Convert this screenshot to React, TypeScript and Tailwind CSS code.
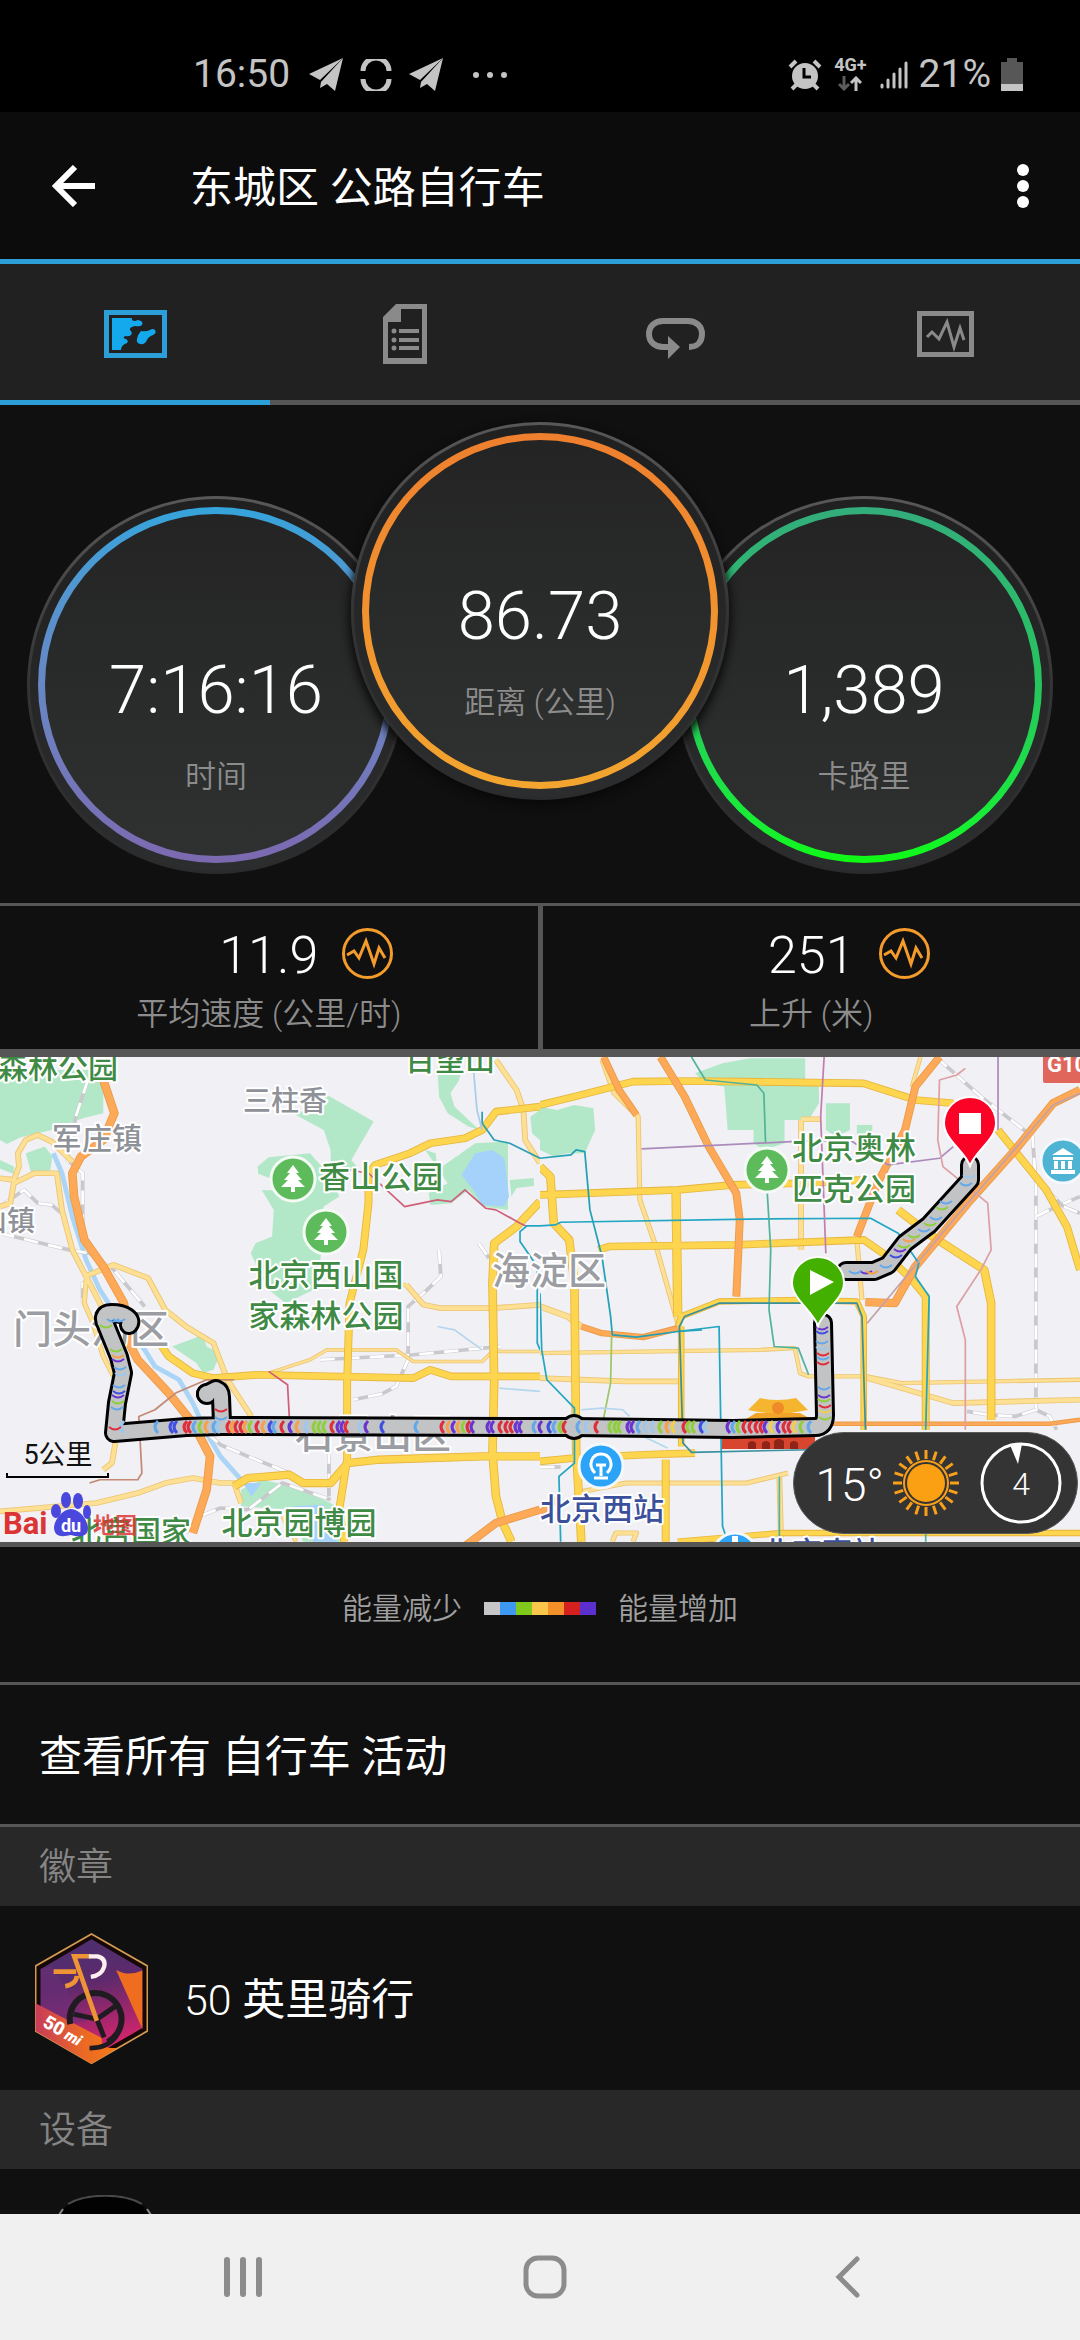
import type { ReactNode } from "react";

function PlaneIcon() {
  return (
    <svg viewBox="0 0 34 34" className="h-[34px] w-[34px]" fill="#c4c4c4">
      <path d="M0 16 34 0 11 22Z" />
      <path d="M34 0 26 33 18 26 11 30 12 24Z" />
    </svg>
  );
}

function StatusBar() {
  return (
    <div className="flex h-28 items-center bg-black pt-[37px] pr-[57px] pl-[193px] text-[39px] leading-none text-[#c4c4c4]">
      <span>16:50</span>
      <div className="ml-[19px] flex items-center gap-[17px]">
        <PlaneIcon />
        <svg viewBox="0 0 32 32" className="h-8 w-8" fill="none" stroke="#c4c4c4" strokeWidth="5">
          <path d="M3 12A13 13 0 0 1 29 12M3 20A13 13 0 0 0 29 20" />
        </svg>
        <PlaneIcon />
        <svg viewBox="0 0 36 8" className="ml-[12px] h-2 w-9" fill="#c4c4c4">
          <circle cx="4" cy="4" r="3" />
          <circle cx="18" cy="4" r="3" />
          <circle cx="32" cy="4" r="3" />
        </svg>
      </div>
      <div className="ml-auto flex items-center">
        <svg viewBox="0 0 34 32" className="h-8 w-[34px]" stroke="#c4c4c4" strokeWidth="4" fill="none">
          <circle cx="17" cy="17" r="13" fill="#c4c4c4" stroke="none" />
          <path d="M2 8 8 2M32 8 26 2M4 30 9 25M30 30 25 25" />
          <path d="M16 9V18H23" stroke="#000" strokeWidth="3" />
        </svg>
        <div className="ml-3 flex flex-col items-center gap-1">
          <span className="text-[18px] leading-[14px] font-bold">4G+</span>
          <svg viewBox="0 0 24 15" className="h-[15px] w-6" fill="none" strokeWidth="3">
            <path d="M6 0V13M1 8 6 13 11 8" stroke="#5c5c5c" />
            <path d="M18 15V2M13 7 18 2 23 7" stroke="#c4c4c4" />
          </svg>
        </div>
        <svg viewBox="0 0 30 30" className="ml-3 h-[30px] w-[30px]" stroke="#c4c4c4" strokeWidth="3" strokeLinecap="round">
          <path d="M3 25V27M9 20V27M15 14V27M21 9V27M27 3V27" />
        </svg>
        <span className="ml-2.5">21%</span>
        <svg viewBox="0 0 22 33" className="ml-2.5 h-[33px] w-[22px]">
          <path d="M6 0H16V4H22V33H0V4H6Z" fill="#575757" />
          <path d="M0 26H22V33H0Z" fill="#c4c4c4" />
        </svg>
      </div>
    </div>
  );
}

function AppBar() {
  return (
    <header className="flex h-[152px] items-center border-b-[5px] border-[#2c9fd8] bg-[#0c0c0c] pr-[47px] pl-[52px]">
      <button type="button" aria-label="返回">
        <svg viewBox="0 0 44 42" className="h-[42px] w-11" fill="none" stroke="#fff" strokeWidth="6">
          <path d="M43 21H5M23 2 4 21 23 40" />
        </svg>
      </button>
      <h1 className="ml-[94px] pt-1.5 text-[43px] text-white">东城区 公路自行车</h1>
      <button type="button" aria-label="更多" className="ml-auto">
        <svg viewBox="0 0 20 44" className="h-11 w-5" fill="#fff">
          <circle cx="10" cy="6" r="6" />
          <circle cx="10" cy="22" r="6" />
          <circle cx="10" cy="38" r="6" />
        </svg>
      </button>
    </header>
  );
}

const tabs: { label: string; icon: ReactNode }[] = [
  {
    label: "地图",
    icon: (
      <svg viewBox="0 0 63 48" className="h-12 w-[63px]" fill="#14a9ec">
        <rect x="2.5" y="2.5" width="58" height="43" fill="none" stroke="#2c9fd8" strokeWidth="5" />
        <path d="M8 8H28Q27 11 31 11L34 10Q40 11 38 15Q36 17 31 16Q25 17 26 20Q29 23 27 25Q25 27 21 26Q18 28 22 29Q25 31 23 33Q17 35 17 40H8Z" />
        <path d="M51 20Q53 23 49 25Q44 27 43 30Q41 35 36 34Q32 33 33 29Q34 24 37 21Q42 22 46 20Q49 18 51 20Z" />
      </svg>
    ),
  },
  {
    label: "统计",
    icon: (
      <svg viewBox="0 0 44 60" className="h-[60px] w-11" fill="#8a8a8a">
        <path fillRule="evenodd" d="M13 0H44V60H0V13ZM18 5V18H5V54H39V5Z" />
        <path d="M16 25H36V29H16ZM16 34H36V38H16ZM16 42H36V46H16Z" />
        <circle cx="11" cy="27" r="2.5" />
        <circle cx="11" cy="36" r="2.5" />
        <circle cx="11" cy="44" r="2.5" />
      </svg>
    ),
  },
  {
    label: "分圈",
    icon: (
      <svg viewBox="0 0 59 41" className="mt-2 h-[41px] w-[59px]" fill="none" stroke="#8a8a8a" strokeWidth="6">
        <path d="M43 29C51 29 56 24 56 16C56 8 50 3 42 3H17C9 3 3 8 3 16C3 24 9 29 17 29H24" />
        <path d="M22 18 34 29 22 41Z" fill="#8a8a8a" stroke="none" />
      </svg>
    ),
  },
  {
    label: "图表",
    icon: (
      <svg viewBox="0 0 57 46" className="h-[46px] w-[57px]" fill="none" stroke="#8a8a8a">
        <rect x="2.5" y="2.5" width="52" height="41" strokeWidth="5" />
        <path d="M10 26 15 21 22 28 30 11 37 36 43 17 47 29" strokeWidth="3" />
      </svg>
    ),
  },
];

function TabBar() {
  return (
    <div role="tablist" className="grid grid-cols-4 bg-[#212122]">
      {tabs.map((tab, i) => (
        <button
          key={tab.label}
          type="button"
          role="tab"
          aria-label={tab.label}
          aria-selected={i === 0}
          className={`flex h-[141px] items-center justify-center border-b-[5px] pt-1 ${
            i === 0 ? "border-[#2c9fd8]" : "border-[#565656]"
          }`}
        >
          {tab.icon}
        </button>
      ))}
    </div>
  );
}

function Dial({
  value,
  label,
  ring,
  className,
}: {
  value: string;
  label: string;
  ring: string;
  className: string;
}) {
  return (
    <div className={`rounded-full bg-linear-to-b from-[#585858] via-[#343434] to-[#2b2b2c] p-[3px] ${className}`}>
      <div className="rounded-full bg-linear-to-b from-[#202021] to-[#2c2d2e] p-2">
        <div className={`rounded-full bg-linear-to-b p-[7px] ${ring}`}>
          <div className="flex h-[342px] w-[342px] flex-col items-center rounded-full bg-linear-to-b from-[#242424] to-[#2f3131] pt-[136px]">
            <div className="text-[67px] leading-[80px] font-light text-white">{value}</div>
            <div className="mt-[23px] text-[31px] leading-[48px] font-[350] text-[#8c8c8c]">{label}</div>
          </div>
        </div>
      </div>
    </div>
  );
}

function Dials() {
  return (
    <section className="flex items-start justify-center bg-[#101010] pt-[17px] pb-[29px]">
      <Dial value="7:16:16" label="时间" ring="from-[#34a4db] to-[#7c69b0]" className="mt-[74px]" />
      <Dial
        value="86.73"
        label="距离 (公里)"
        ring="from-[#ee7f2e] to-[#f3a52f]"
        className="z-10 -mx-[54px] shadow-[0_4px_10px_2px_#0a0a0a]"
      />
      <Dial value="1,389" label="卡路里" ring="from-[#33ad7c] via-[#26c45c] to-[#0ffa12]" className="mt-[74px]" />
    </section>
  );
}

function Stat({ value, label }: { value: string; label: string }) {
  return (
    <div className="bg-[#101010] pt-[18px] pb-[14px] text-center">
      <div className="grid grid-cols-[1fr_auto_1fr] items-start">
        <span className="col-start-2 text-[52px] leading-[64px] font-light text-white">{value}</span>
        <button type="button" aria-label={`${label} 图表`} className="justify-self-start pt-1 pl-6">
          <svg viewBox="0 0 51 51" className="h-[51px] w-[51px]" fill="none" stroke="#f39c2c" strokeWidth="3">
            <circle cx="25.5" cy="25.5" r="24" />
            <path d="M5 27 12 23 17 30 24 13 32 36 37 20 43 30" />
          </svg>
        </button>
      </div>
      <div className="mt-1.5 text-[32px] leading-[41px] font-[350] text-[#8c8c8c]">{label}</div>
    </div>
  );
}

type Road = [d: string, width: number];

const west = {
  parks: [
    "M0 60H290L300 95V190L240 205 150 240 60 262 20 282 0 270Z",
    "M0 330 40 350V372L0 356Z",
    "M75 310 130 290 152 320 146 362 90 368Z",
    "M950 135 1085 215 1020 330 1040 355 960 380V300L940 240 850 190 900 180Z",
    "M748 350 780 322 900 310 960 380 985 440 940 470 930 640 910 720 830 760 780 720 728 610 742 580 790 560 795 480 760 420 800 422 800 390 750 372Z",
    "M1270 50 1340 62 1332 92 1308 130 1320 170 1392 240 1360 230 1300 190 1275 140Z",
    "M1235 300 1265 310 1270 360 1380 280 1475 275V480L1400 470 1360 420 1310 460 1250 465 1245 430 1300 400Z",
    "M1480 390 1550 384V408L1500 414 1485 440Z",
    "M1540 200 1568 180V270L1545 250Z",
    "M500 890 590 855 600 890 640 910 620 960 590 970 570 940Z",
    "M700 1320 760 1290 850 1310 960 1360 1000 1390V1476H880L850 1380 700 1370Z",
  ],
  lakes: ["M1380 310 1430 300 1465 325 1478 440 1465 470 1400 465 1375 420 1340 375Z", "M850 1370 940 1365 980 1476H910Z", "M705 1300 760 1300 730 1340Z"],
  rivers: "M155 310 180 370 210 500 250 630 290 720 340 800 420 900 450 950 520 990 560 1060 600 1150 640 1220 700 1290",
  rail: [
    "M255 90 220 200 195 330 240 370V580",
    "M0 550 200 600 260 610 330 660 420 770",
    "M0 470 70 420 110 460 150 465 190 500",
    "M1275 600 1280 680 1240 720 1185 770V930L1150 1010 1110 1032 1025 1050",
    "M600 1150 640 1185 720 1220 840 1270",
    "M930 930 1200 915 1455 890",
    "M540 1450 580 1400 640 1375 720 1380 770 1340 820 1300 960 1350",
    "M1390 580 1420 625",
    "M955 1200V1340",
    "M265 690 240 700V760",
  ],
  minor: [
    ["M0 385 40 390 55 350 52 310 75 270 110 255 150 275 210 335", 12],
    ["M0 470 30 460 40 400 100 370H165L180 480 210 600 250 680 270 720 310 800", 12],
    ["M250 690 245 760 270 820 300 920 330 980", 10],
    ["M245 680 330 645 430 685 480 780 540 830 620 880 660 990 730 1100", 12],
    ["M1180 705 1230 765 1280 775H1430L1568 765", 12],
    ["M1080 705H1180", 8],
    ["M0 1385 280 1360 400 1330 480 1300 560 1285 640 1300 680 1300 700 1360", 12],
    ["M335 1180 325 1240 300 1260", 12],
    ["M1440 30 1500 120 1520 180 1525 270 1568 340", 12],
    ["M780 970 900 930 950 900H1150L1200 935H1400L1430 905H1568", 6],
    ["M820 1400 860 1476", 8],
  ] as Road[],
  major: [
    ["M1568 170 1440 185 1400 240 1350 265 1250 280 1190 310 1090 345 1070 370V460L1055 600 1015 760 1008 1000V1230L985 1380 1000 1476", 18],
    ["M470 890 490 920 560 970 620 985 750 975 1200 985 1250 960 1310 980H1568", 18],
    ["M1568 455 1500 530 1435 580 1430 700 1435 1000 1430 1210 1440 1340 1460 1420 1485 1476", 20],
    ["M680 1310 720 1285 840 1275 880 1300H960L1010 1240 1100 1230 1400 1220H1568", 20],
  ] as Road[],
  highway: [
    ["M300 90 332 190 300 270 235 320 210 370 215 440 245 570 300 650 360 760 375 880 400 930 490 1030 560 1120 610 1220 600 1320 560 1450", 20],
    ["M1350 1490 1440 1420 1568 1380", 20],
  ] as Road[],
  metro: [
    ["M985 355 1070 370 1175 470 1270 450 1310 455 1350 420 1410 475 1440 480 1510 520 1530 530", "#d0607a"],
    ["M780 965 835 1005 840 1100", "#d0607a"],
    ["M1400 185V220L1435 270 1480 280 1568 325", "#2c9fb4"],
    ["M1568 528H1530L1510 545V575L1560 650V880L1568 900", "#22a6c2"],
    ["M260 1300 290 1290H400L412 1270 403 1100 450 1080 510 1030 600 990H680", "#c28a74"],
    ["M1375 60 1385 180 1400 240", "#a9cdea"],
    ["M1270 830 1320 840 1400 900", "#b4d6ee"],
    ["M1450 1015 1568 1025", "#b4d6ee"],
  ],
};

const east: typeof west = {
  parks: [
    "M450 70 530 40 610 25H770V100H810V160L780 210H710V280L650 300 620 280V240H545L535 110 480 100Z",
    "M0 170 50 180 100 165 155 175 160 240 130 310 80 310 40 320 0 300Z",
    "M830 160H900V240L860 260 830 240Z",
    "M920 225H965V260H920Z",
  ],
  lakes: [],
  rivers: "",
  rail: [
    "M1150 21 1280 140 1430 260 1440 400V1080L1480 1100 1500 1140",
    "M1440 1080 1380 1100 1300 1095 1240 1085",
    "M1440 500 1500 470 1568 440",
    "M1470 420 1520 470 1568 490",
    "M0 1252H60",
  ],
  minor: [
    ["M0 910 640 900 740 895 755 970 780 980 950 980 1050 1000 1568 990", 8],
    ["M0 985 250 995H400", 12],
    ["M758 210V600M758 208H815", 12],
    ["M950 985 1200 1060 1568 1050", 12],
    ["M100 1330 250 1300H600L720 1270", 10],
    ["M0 770 80 800 120 830", 14],
    ["M920 570 935 750", 10],
    ["M1105 21 1080 110", 8],
    ["M180 30 215 130 285 200 290 450 340 600 400 820", 10],
    ["M695 1280 700 1476", 12],
    ["M210 1476 220 1450H280L270 1476", 10],
  ],
  major: [
    ["M0 165 100 140 270 95 420 93 600 95 940 100 1090 150 1200 160", 18],
    ["M0 435 400 420 560 405 750 400 940 390", 18],
    ["M0 350 30 380 40 520 85 570 100 700 105 1200 120 1476", 20],
    ["M395 425 400 800", 22],
    ["M170 600 200 590 570 585 940 570 1010 620 1080 690 1120 740V1140", 18],
    ["M1040 480 1140 560 1290 660 1310 760V1110", 20],
    ["M1330 240 1400 330 1470 420 1530 530 1568 660", 18],
    ["M400 830 410 800 520 755 750 750 920 755 940 800V1140", 14],
    ["M410 830V1190", 14],
    ["M0 1235 100 1225 300 1215 450 1210", 18],
    ["M365 1230V1476", 18],
    ["M400 1476 700 1450H1568", 14],
  ],
  highway: [
    ["M185 21 230 120 280 195", 16],
    ["M350 21 420 140 490 290 570 430 580 510 570 740", 18],
    ["M1160 21 1090 110 1060 240 980 400 920 560", 18],
    ["M1568 120 1490 160 1380 300 1250 450 1090 650 1030 760 945 757", 20],
    ["M120 830 180 850 300 862 400 835", 14],
    ["M850 1122H1480L1568 1110", 8],
    ["M0 1390 60 1340", 14],
  ],
  metro: [
    ["M0 325 90 315 105 300 130 305 145 480 180 620 205 800 210 855 280 862 400 845 470 840", "#22a0b4"],
    ["M208 860 205 1000 180 1130", "#9cc765"],
    ["M0 528 45 525 60 517 660 507 960 505 1040 550 1100 640 1090 680 1130 740 1120 1140", "#22a6c2"],
    ["M440 21 480 90 630 105 650 130 655 280M660 430 670 600 665 780 680 890 750 895 780 975", "#52b39c"],
    ["M400 845 520 830 530 1430 545 1476", "#22a6c2"],
    ["M780 1200 440 1208 415 1180 405 830 420 800 520 760H920L935 800 945 1140", "#3a8f9c"],
    ["M0 730 5 900 20 990 100 1075V1240L55 1280 60 1476", "#22a6c2"],
    ["M695 1280V1476M1120 1450V1476", "#52b39c"],
    ["M295 297 730 275 900 270 1010 345 1160 325 1200 290M1330 21V240", "#ab8bbb"],
    ["M825 21 815 200 830 610", "#c07fb0"],
    ["M1235 55 1210 75 1160 90 1155 270 1170 350 1300 460 1310 600 1280 660 1210 770 1235 870V1140", "#dda0a4"],
    ["M1568 130 1490 165 1200 510 950 820", "#c3a2a8"],
    ["M120 1080 180 1075 240 1080 260 1100M280 1150 370 1195", "#b4d6ee"],
  ],
};

function Roads({ roads, casing, fill }: { roads: Road[]; casing: string; fill: string }) {
  return (
    <>
      {roads.map(([d, w]) => (
        <path key={`casing${d}`} d={d} stroke={casing} strokeWidth={w + 5} />
      ))}
      {roads.map(([d, w]) => (
        <path key={d} d={d} stroke={fill} strokeWidth={w} />
      ))}
    </>
  );
}

function MapTile({ x, tile }: { x: number; tile: typeof west }) {
  return (
    <svg x={x} y="0" width="540" height="485" viewBox="0 21 1568 1456" preserveAspectRatio="none" fill="none" strokeLinejoin="round">
      {tile.parks.map((d) => (
        <path key={d} d={d} fill="#b2e8c8" />
      ))}
      {tile.lakes.map((d) => (
        <path key={d} d={d} fill="#a5d2fb" />
      ))}
      <path d={tile.rivers} stroke="#abd5f6" strokeWidth="14" />
      {tile.rail.map((d) => (
        <g key={d}>
          <path d={d} stroke="#c9c9cd" strokeWidth="11" />
          <path d={d} stroke="#fff" strokeWidth="8" strokeDasharray="42 30" />
        </g>
      ))}
      <Roads roads={tile.minor} casing="#ecc472" fill="#fde093" />
      <Roads roads={tile.major} casing="#e6b53e" fill="#fdd54e" />
      <Roads roads={tile.highway} casing="#ea9b48" fill="#fda957" />
      {tile.metro.map(([d, color]) => (
        <path key={d} d={d} stroke={color} strokeWidth="5" />
      ))}
    </svg>
  );
}

const labels: { text: string; x: number; y: number; size: number; color: string }[] = [
  { text: "森林公园", x: 58, y: 21, size: 30, color: "#3f8a45" },
  { text: "百望山", x: 450, y: 13, size: 30, color: "#3f8a45" },
  { text: "三柱香", x: 285, y: 54, size: 28, color: "#8f9198" },
  { text: "军庄镇", x: 97, y: 92, size: 30, color: "#8f9198" },
  { text: "山镇", x: 7, y: 174, size: 28, color: "#8f9198" },
  { text: "香山公园", x: 381, y: 131, size: 31, color: "#3f8a45" },
  { text: "北京西山国", x: 326, y: 229, size: 31, color: "#3f8a45" },
  { text: "家森林公园", x: 326, y: 270, size: 31, color: "#3f8a45" },
  { text: "海淀区", x: 549, y: 227, size: 38, color: "#9b9da3" },
  { text: "门头沟区", x: 91, y: 286, size: 39, color: "#9b9da3" },
  { text: "石景山区", x: 373, y: 391, size: 39, color: "#9b9da3" },
  { text: "北京园博园", x: 299, y: 477, size: 31, color: "#3f8a45" },
  { text: "北宫国家", x: 131, y: 485, size: 30, color: "#3f8a45" },
  { text: "北京奥林", x: 854, y: 102, size: 31, color: "#3f8a45" },
  { text: "匹克公园", x: 854, y: 143, size: 31, color: "#3f8a45" },
  { text: "北京西站", x: 602, y: 463, size: 31, color: "#3b509c" },
  { text: "北京南站", x: 822, y: 506, size: 30, color: "#3b509c" },
];

function Park({ x, y }: { x: number; y: number }) {
  return (
    <g transform={`translate(${x} ${y})`}>
      <circle r="22" fill="#5dbb5c" stroke="#f4faf4" strokeWidth="3" />
      <path d="M0-14 6-6H3L9 1H5L12 8H2V13H-2V8H-12L-5 1H-9L-3-6H-6Z" fill="#fff" />
    </g>
  );
}

const route =
  "M129 268C134 262 124 256 112 256 102 256 103 263 106 268L119 300 123 316 117 346 114 376 186 370 222 369 540 370 574 370 733 372 815 370Q825 370 825 358L823 266M206 337 216 332Q221 334 221 340L222 366M846 214H874L888 208 905 186 929 168 970 123V108";

const c = { r: "#e02d3c", o: "#f6a04c", g: "#8fcf3c", y: "#f1cf4a", b: "#63a8ea", u: "#3f4fe0", p: "#6a35cf", l: "#9cc8ee" };

// power samples along the east-west leg: x position and colour key
const samples: [number, keyof typeof c][] = [
  [124, "l"], [158, "b"], [173, "u"], [177, "u"], [187, "r"], [191, "r"], [196, "b"], [202, "g"], [208, "o"], [216, "b"], [220, "l"],
  [230, "r"], [234, "o"], [238, "r"], [243, "r"], [247, "o"], [252, "g"], [259, "r"], [265, "o"], [272, "u"], [276, "b"], [284, "r"],
  [292, "p"], [299, "o"], [308, "l"], [316, "g"], [321, "g"], [326, "g"], [334, "r"], [340, "p"], [344, "p"], [348, "r"], [362, "l"],
  [368, "p"], [384, "u"], [418, "b"], [444, "r"], [450, "o"], [455, "p"], [460, "o"], [465, "g"], [470, "r"], [474, "p"], [490, "p"],
  [494, "p"], [502, "r"], [508, "r"], [513, "r"], [518, "p"], [522, "p"], [536, "b"], [542, "p"], [551, "u"], [556, "b"], [562, "g"],
  [566, "r"], [580, "b"], [588, "l"], [598, "r"], [612, "g"], [617, "g"], [621, "g"], [630, "p"], [634, "p"], [640, "b"], [647, "l"],
  [654, "l"], [662, "g"], [669, "o"], [675, "y"], [686, "r"], [690, "g"], [695, "g"], [703, "u"], [707, "l"], [730, "p"], [735, "b"],
  [740, "g"], [746, "r"], [752, "r"], [758, "r"], [763, "r"], [767, "p"], [773, "y"], [780, "p"], [786, "r"], [791, "r"], [796, "y"],
  [803, "g"], [811, "b"],
];

// remaining legs run north-south, so these carry both coordinates
const climbs: [number, number, keyof typeof c][] = [
  [113, 262, "b"], [106, 268, "g"], [119, 262, "b"], [116, 292, "g"], [118, 298, "o"], [118, 302, "p"], [120, 310, "b"], [121, 316, "l"],
  [119, 328, "b"], [119, 334, "u"], [118, 338, "p"], [118, 344, "g"], [117, 350, "b"], [115, 370, "r"], [221, 352, "r"], [221, 360, "b"],
  [822, 270, "p"], [822, 274, "u"], [822, 284, "b"], [822, 290, "l"], [823, 296, "r"], [823, 300, "b"], [823, 305, "r"], [824, 330, "b"],
  [824, 338, "p"], [824, 342, "g"], [825, 348, "r"], [825, 353, "y"], [825, 360, "g"], [866, 214, "p"], [872, 214, "o"], [855, 214, "b"],
  [886, 208, "b"], [896, 198, "u"], [900, 192, "p"], [904, 188, "g"], [909, 182, "o"], [914, 178, "g"], [924, 172, "b"], [930, 166, "g"],
  [936, 160, "b"], [942, 150, "g"], [946, 144, "b"], [966, 126, "b"], [969, 118, "l"],
];

function BaiduLogo() {
  return (
    <g className="font-bold">
      <text x="3" y="477" fontSize="31" fill="#dc3434">Bai</text>
      <g fill="#4a47dd">
        <ellipse cx="56" cy="454" rx="5" ry="7" />
        <ellipse cx="66" cy="443" rx="5" ry="8" />
        <ellipse cx="78" cy="444" rx="5" ry="8" />
        <ellipse cx="87" cy="455" rx="4" ry="7" />
        <path d="M71 452C63 452 54 463 54 471C55 482 65 479 71 478C78 480 88 481 88 471C88 464 80 452 71 452Z" />
      </g>
      <text x="71" y="475" fontSize="18" textAnchor="middle" fill="#fff">du</text>
      <text x="93" y="476" fontSize="22" fill="#dc3434" fillOpacity="0.85">地图</text>
    </g>
  );
}

function RouteMap() {
  return (
    <svg viewBox="0 0 1080 485" className="block h-auto w-full bg-[#f0f0f5]" role="img" aria-label="路线地图">
      <MapTile x={0} tile={west} />
      <MapTile x={540} tile={east} />

      <g>
        <path d="M748 353 760 341Q778 345 796 341L808 353Q778 360 748 353Z" fill="#f5b52e" />
        <path d="M756 356H800V372H756Z" fill="#c8402c" />
        <path d="M746 362 756 356H800L811 362Q778 367 746 362Z" fill="#f0a52a" />
        <circle cx="778" cy="351" r="6" fill="#f08a28" />
        <path d="M722 378H815V392H722Z" fill="#d9462f" />
        <path d="M748 392V386Q752 382 756 386V392ZM762 392V386Q766 382 770 386V392ZM774 392V384Q779 380 784 384V392ZM790 392V386Q794 382 798 386V392Z" fill="#8e2318" />
      </g>

      <g className="font-medium" textAnchor="middle" stroke="#fff" strokeWidth="4" strokeLinejoin="round" paintOrder="stroke">
        {labels.map((l) => (
          <text key={l.text} x={l.x} y={l.y} fontSize={l.size} fill={l.color}>
            {l.text}
          </text>
        ))}
      </g>
      <Park x={293} y={122} />
      <Park x={326} y={175} />
      <Park x={767} y={113} />

      <g fill="#2ba3f7" stroke="#f4f8fd" strokeWidth="3">
        <circle cx="601" cy="409" r="22" />
        <circle cx="735" cy="498" r="22" />
        <circle cx="1063" cy="104" r="22" fill="#4fb3d3" />
      </g>
      <path d="M595 416C587 408 592 397 601 397S615 408 607 416M596 408H606M601 409V419M594 421H608" fill="none" stroke="#fff" strokeWidth="3" />
      <path d="M735 479V485" stroke="#fff" strokeWidth="6" />
      <path d="M1063 91 1074 98H1052ZM1053 100H1073V103H1053ZM1054 104H1058V112H1054ZM1061 104H1065V112H1061ZM1068 104H1072V112H1068ZM1051 113H1075V117H1051Z" fill="#fff" />
      <rect x="1043" y="-6" width="50" height="32" rx="2" fill="#e0665c" />
      <text x="1047" y="15" fontSize="22" className="font-bold" fill="#fff">G10</text>

      <g fill="none" strokeLinejoin="round" strokeLinecap="round">
        <path d={route} stroke="#000" strokeWidth="20" />
        <circle cx="207" cy="337" r="11" fill="#000" />
        <circle cx="574" cy="370" r="13" fill="#000" />
        <path d={route} stroke="#c2c3c5" strokeWidth="14" />
        <circle cx="207" cy="337" r="8" fill="#c2c3c5" />
        <circle cx="574" cy="370" r="10" fill="#c2c3c5" />
        <g strokeWidth="3" strokeLinecap="butt">
          {samples.map(([x, k]) => (
            <path key={x} d={`M${x} 364q-6 6 0 12`} stroke={c[k]} />
          ))}
          {climbs.map(([x, y, k]) => (
            <path key={`${x}-${y}`} d={`M${x - 6} ${y}q6 5 12 0`} stroke={c[k]} strokeWidth="2" />
          ))}
        </g>
      </g>

      <g stroke="#fff" strokeWidth="2">
        <path d="M970 109C965 94 944 83 944 66A26 26 0 0 1 996 66C996 83 975 94 970 109Z" fill="#fb0326" />
        <path d="M818 269C813 254 792 242 792 226A26 26 0 0 1 844 226C844 242 823 254 818 269Z" fill="#43b000" />
      </g>
      <path d="M959 56H981V77H959ZM810 213 834 225 810 238Z" fill="#fff" />

      <text x="58" y="407" fontSize="27" textAnchor="middle" fill="#111">5公里</text>
      <path d="M7 416V420H108V416" fill="none" stroke="#000" strokeWidth="2" />
      <BaiduLogo />
    </svg>
  );
}

const rays = Array.from({ length: 20 }, (_, i) => i * 18);

function Weather() {
  return (
    <div className="absolute right-0.5 bottom-2 flex h-[102px] items-center rounded-full border border-[#5a5a5a] bg-[#343435] pr-3.5 pl-[22px] text-white">
      <span className="pt-1 text-[46px] leading-none font-light">15°</span>
      <svg viewBox="-34 -34 68 68" className="ml-2 h-[68px] w-[68px]" stroke="#f9a01b" strokeWidth="3" fill="none">
        <circle r="19" fill="#fb9f13" stroke="none" />
        <circle r="22" strokeWidth="2" />
        {rays.map((deg) => (
          <path key={deg} d="M0-24V-33" transform={`rotate(${deg})`} />
        ))}
      </svg>
      <svg viewBox="-42 -42 84 84" className="ml-[19px] h-[84px] w-[84px]">
        <circle r="39" fill="none" stroke="#fff" strokeWidth="3" />
        <path d="M-11-38-3-19 1-39Z" fill="#fff" />
        <text y="12" fontSize="32" textAnchor="middle" fill="#fff" className="font-light">4</text>
      </svg>
    </div>
  );
}

function Legend() {
  return (
    <div className="flex h-[138px] items-center justify-center gap-[22px] border-b-[3px] border-[#565656] pb-3 text-[30px] font-[350] text-[#a0a0a0]">
      <span>能量减少</span>
      <div className="flex h-[13px]">
        <i className="w-4 bg-[#c6c6c8]" />
        <i className="w-4 bg-[#3e97f0]" />
        <i className="w-4 bg-[#82c91e]" />
        <i className="w-4 bg-[#f7c64a]" />
        <i className="w-4 bg-[#f4902a]" />
        <i className="w-4 bg-[#d4211f]" />
        <i className="w-4 bg-[#5c30cf]" />
      </div>
      <span>能量增加</span>
    </div>
  );
}

function SectionTitle({ children }: { children: ReactNode }) {
  return (
    <h2 className="bg-[#282828] px-[39px] pt-[3px] text-[37px] leading-[76px] font-[350] text-[#858585]">{children}</h2>
  );
}

function Badge() {
  return (
    <svg viewBox="44 36 340 394" className="h-[131px] w-[113px]">
      <defs>
        <linearGradient id="badge" x1="0" y1="0" x2="0.2" y2="1">
          <stop offset="0" stopColor="#4a3070" />
          <stop offset="0.45" stopColor="#5d2a6c" />
          <stop offset="1" stopColor="#d8246c" />
        </linearGradient>
        <linearGradient id="ribbon" x1="0" y1="0" x2="1" y2="0">
          <stop offset="0" stopColor="#c93c58" />
          <stop offset="0.6" stopColor="#ea6a24" />
          <stop offset="1" stopColor="#f47a16" />
        </linearGradient>
      </defs>
      <path d="M214 39 382 135V331L214 428 46 331V135Z" fill="#150807" stroke="#d39a52" strokeWidth="5" />
      <path d="M214 55 367 144V322L214 410 61 322V144Z" fill="url(#badge)" />
      <path d="M92 135 61 144V262L150 310 200 300Z" fill="#6a2f78" opacity="0.6" />
      <path d="M288 147Q325 168 367 149V325Z" fill="#ee6d1f" />
      <path d="M46 247 245 352Q240 385 292 382L214 429 46 331Z" fill="url(#ribbon)" />
      <g fill="none" stroke="#201b20">
        <path d="M150 310A78 78 0 1 1 262 364" strokeWidth="18" />
        <path d="M230 295 160 280M230 295 295 250M232 300 252 350" strokeWidth="15" />
        <path d="M208 382Q262 384 290 345" strokeWidth="14" />
      </g>
      <path d="M100 152H168M212 106H162L230 300M135 196Q168 190 170 165" fill="none" stroke="#ef9434" strokeWidth="14" />
      <path d="M206 106H232Q258 112 252 138Q244 164 212 168" fill="none" stroke="#fdeef0" strokeWidth="13" />
      <text x="64" y="316" fontSize="56" fill="#fff" className="font-black" transform="rotate(29 64 316)">
        50<tspan fontSize="46" dx="10" fontStyle="italic">mi</tspan>
      </text>
    </svg>
  );
}

function NavBar() {
  return (
    <nav className="grid h-[126px] shrink-0 grid-cols-3 items-center justify-items-center bg-[#f0f0f0] pr-[82px] pl-[92px]">
      <button type="button" aria-label="最近">
        <svg viewBox="0 0 44 44" className="h-11 w-11" stroke="#8c8c8c" strokeWidth="6" strokeLinecap="round">
          <path d="M6 5V39M22 5V39M38 5V39" />
        </svg>
      </button>
      <button type="button" aria-label="主页">
        <svg viewBox="0 0 44 44" className="h-11 w-11" fill="none" stroke="#8c8c8c" strokeWidth="5">
          <rect x="3" y="3" width="38" height="38" rx="12" />
        </svg>
      </button>
      <button type="button" aria-label="后退">
        <svg viewBox="0 0 44 44" className="h-11 w-11" fill="none" stroke="#8c8c8c" strokeWidth="5" strokeLinecap="round">
          <path d="M32 4 14 22 32 40" />
        </svg>
      </button>
    </nav>
  );
}

export default function App() {
  return (
    <div
      lang="zh-CN"
      className="flex h-screen flex-col bg-[#101010] font-['Roboto','Noto_Sans_CJK_SC',sans-serif]"
    >
      <StatusBar />
      <AppBar />
      <TabBar />
      <main className="min-h-0 flex-1 overflow-hidden">
        <Dials />
        <section className="grid grid-cols-2 gap-[5px] border-t-[3px] border-b-8 border-[#565656] bg-[#565656]">
          <Stat value="11.9" label="平均速度 (公里/时)" />
          <Stat value="251" label="上升 (米)" />
        </section>
        <section className="relative border-b-[5px] border-[#565656]">
          <RouteMap />
          <Weather />
        </section>
        <Legend />
        <a
          href="#activities"
          className="block border-b-[3px] border-[#565656] px-[39px] pt-[5px] text-[43px] leading-[134px] text-white"
        >
          查看所有 自行车 活动
        </a>
        <SectionTitle>徽章</SectionTitle>
        <a href="#badge" className="flex h-[184px] items-center gap-9 px-[35px] text-[43px] text-white">
          <Badge />
          <span className="pt-1">
            <span className="font-light">50</span> 英里骑行
          </span>
        </a>
        <SectionTitle>设备</SectionTitle>
        <div className="flex h-[184px] items-start px-[58px] pt-[26px]">
          <svg viewBox="0 0 94 94" className="h-[94px] w-[94px]">
            <path d="M1 20C14-6 80-6 93 20V94H1Z" fill="#020202" />
            <path d="M10 9C28-2 66-2 84 9" fill="none" stroke="#4a4a4a" strokeWidth="2" />
            <path d="M1 20 5 14M93 20 89 14" stroke="#8a8a8a" strokeWidth="2" />
          </svg>
        </div>
      </main>
      <NavBar />
    </div>
  );
}
